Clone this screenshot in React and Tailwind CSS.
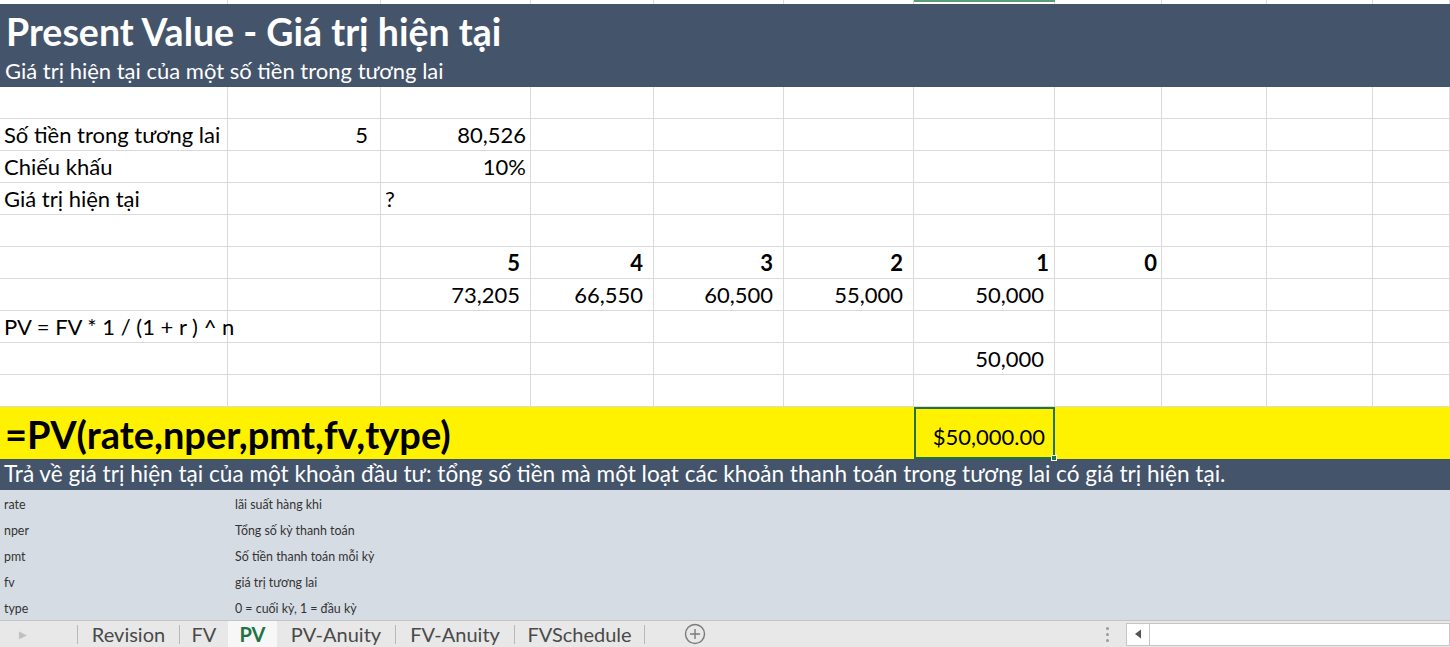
import React from 'react'

const COLS = 'grid grid-cols-[228px_153px_150px_123px_130px_130px_141px_107px_105px_106px_1fr]'
const LINE = 'border-[#dadada]'

// rows below the title band, one entry per row, 11 columns each (A..K)
// p: right padding class for right-aligned numbers
const rows = [
  [],
  [{ t: 'Số tiền trong tương lai' }, { t: '5', r: true, p: 'pr-[12px]' }, { t: '80,526', r: true, p: 'pr-[4px]' }],
  [{ t: 'Chiếu khấu' }, null, { t: '10%', r: true, p: 'pr-[4px]' }],
  [{ t: 'Giá trị hiện tại' }, null, { t: '?' }],
  [],
  [
    null,
    null,
    { t: '5', r: true, b: true },
    { t: '4', r: true, b: true },
    { t: '3', r: true, b: true },
    { t: '2', r: true, b: true },
    { t: '1', r: true, b: true, p: 'pr-[5px]' },
    { t: '0', r: true, b: true, p: 'pr-[4px]' },
  ],
  [null, null, { t: '73,205', r: true }, { t: '66,550', r: true }, { t: '60,500', r: true }, { t: '55,000', r: true }, { t: '50,000', r: true }],
  [{ t: 'PV = FV * 1 / (1 + r ) ^ n' }],
  [null, null, null, null, null, null, { t: '50,000', r: true }],
  [],
]

const args = [
  ['rate', 'lãi suất hàng khi'],
  ['nper', 'Tổng số kỳ thanh toán'],
  ['pmt', 'Số tiền thanh toán mỗi kỳ'],
  ['fv', 'giá trị tương lai'],
  ['type', '0 = cuối kỳ, 1 = đầu kỳ'],
]

const tabs = [
  { t: 'Revision', w: 'w-[103px]' },
  { t: 'FV', w: 'w-[48px]' },
  { t: 'PV', w: 'w-[49px]', active: true },
  { t: 'PV-Anuity', w: 'w-[119px]' },
  { t: 'FV-Anuity', w: 'w-[119px]' },
  { t: 'FVSchedule', w: 'w-[130px]' },
]

function Cell({ c }) {
  return (
    <div
      className={`border-r border-b ${LINE} flex items-center whitespace-nowrap overflow-visible pl-[4px] ${c?.p || 'pr-[10px]'} ${
        c?.r ? 'justify-end' : 'justify-start'
      } ${c?.b ? 'font-bold' : ''}`}
    >
      {c?.t}
    </div>
  )
}

function DataRow({ cells }) {
  const full = Array.from({ length: 11 }, (_, i) => cells[i] || null)
  return (
    <div className={`${COLS} h-[32px]`}>
      {full.map((c, i) => (
        <Cell key={i} c={c} />
      ))}
    </div>
  )
}

function Tabs() {
  return (
    <div className="h-[27px] bg-[#e8e8e8] border-t border-[#c4c4c4] flex items-center text-[20px] text-[#4a4a4a]">
      <div className="w-[77px] h-full flex items-center pl-[19px] text-[10px] text-[#c0c0c0]">▶</div>
      {tabs.map((tab, i) =>
        tab.active ? (
          <div key={tab.t} className={`${tab.w} h-full bg-[#f7f7f7] flex items-center justify-center font-bold text-[#217346]`}>
            {tab.t}
          </div>
        ) : (
          <div
            key={tab.t}
            className={`${tab.w} h-[19px] flex items-center justify-center ${i === 0 ? 'border-l' : ''} ${
              tabs[i + 1]?.active ? '' : 'border-r'
            } border-[#b8b8b8]`}
          >
            {tab.t}
          </div>
        )
      )}
      <div className="ml-[39px]">
        <svg width="22" height="22" viewBox="0 0 22 22" fill="none" stroke="#7a7a7a" strokeWidth="1.4">
          <circle cx="11" cy="11" r="9.5" />
          <path d="M11 6v10M6 11h10" />
        </svg>
      </div>
      <div className="ml-auto flex items-center h-full">
        <div className="flex flex-col gap-[3px] mr-[17px]">
          <span className="w-[3px] h-[3px] rounded-full bg-[#9a9a9a]" />
          <span className="w-[3px] h-[3px] rounded-full bg-[#9a9a9a]" />
          <span className="w-[3px] h-[3px] rounded-full bg-[#9a9a9a]" />
        </div>
        <div className="w-[24px] h-[23px] bg-white border border-[#c6c6c6] flex items-center justify-center">
          <svg width="8" height="10" viewBox="0 0 8 10">
            <path d="M7 0.5v9L1 5z" fill="#555" />
          </svg>
        </div>
        <div className="w-[300px] h-[23px] bg-white border-y border-r border-[#c6c6c6]" />
      </div>
    </div>
  )
}

export default function App() {
  return (
    <div className="w-[1450px] h-[647px] overflow-hidden bg-white text-[22px] text-black font-['Lato','Open_Sans',sans-serif] leading-none">
      {/* column header edge, G selected */}
      <div className={`${COLS} h-[4px] relative`}>
        {Array.from({ length: 11 }, (_, i) => (
          <div key={i} className={`border-r ${LINE}`} />
        ))}
        <div className="absolute left-[914px] top-0 w-[141px] h-[2px] bg-[#5a9c7a]" />
      </div>

      {/* title band */}
      <div className="h-[83px] bg-[#44546a] text-white px-[6px] flex flex-col whitespace-nowrap">
        <div className="h-[51px] flex items-center pt-[4px] font-bold text-[37.5px]">Present Value - Giá trị hiện tại</div>
        <div className="h-[32px] flex items-center -ml-[1px] text-[22px]">Giá trị hiện tại của một số tiền trong tương lai</div>
      </div>

      {rows.map((r, i) => (
        <DataRow key={i} cells={r} />
      ))}

      {/* function band */}
      <div className={`${COLS} h-[52px] bg-[#fff200]`}>
        <div className="col-span-6 flex items-end pb-[6px] pl-[5px] font-bold text-[38px] whitespace-nowrap">
          =PV(rate,nper,pmt,fv,type)
        </div>
        <div className="relative border-2 border-[#217346] flex items-end justify-end pb-[9px] pr-[8px] whitespace-nowrap">
          $50,000.00
          <span className="absolute -right-[4px] -bottom-[4px] w-[6px] h-[6px] bg-[#217346] border border-white" />
        </div>
      </div>

      <div className="h-[31px] bg-[#44546a] text-white flex items-center px-[4px] text-[22.6px] whitespace-nowrap">
        Trả về giá trị hiện tại của một khoản đầu tư: tổng số tiền mà một loạt các khoản thanh toán trong tương lai có giá trị hiện tại.
      </div>

      <div className="h-[130px] bg-[#d6dce4] text-[12.4px] text-[#333] pt-[2px]">
        {args.map(([k, v]) => (
          <div key={k} className="h-[26px] flex items-center">
            <div className="w-[235px] pl-[4px]">{k}</div>
            <div>{v}</div>
          </div>
        ))}
      </div>

      <Tabs />
    </div>
  )
}
